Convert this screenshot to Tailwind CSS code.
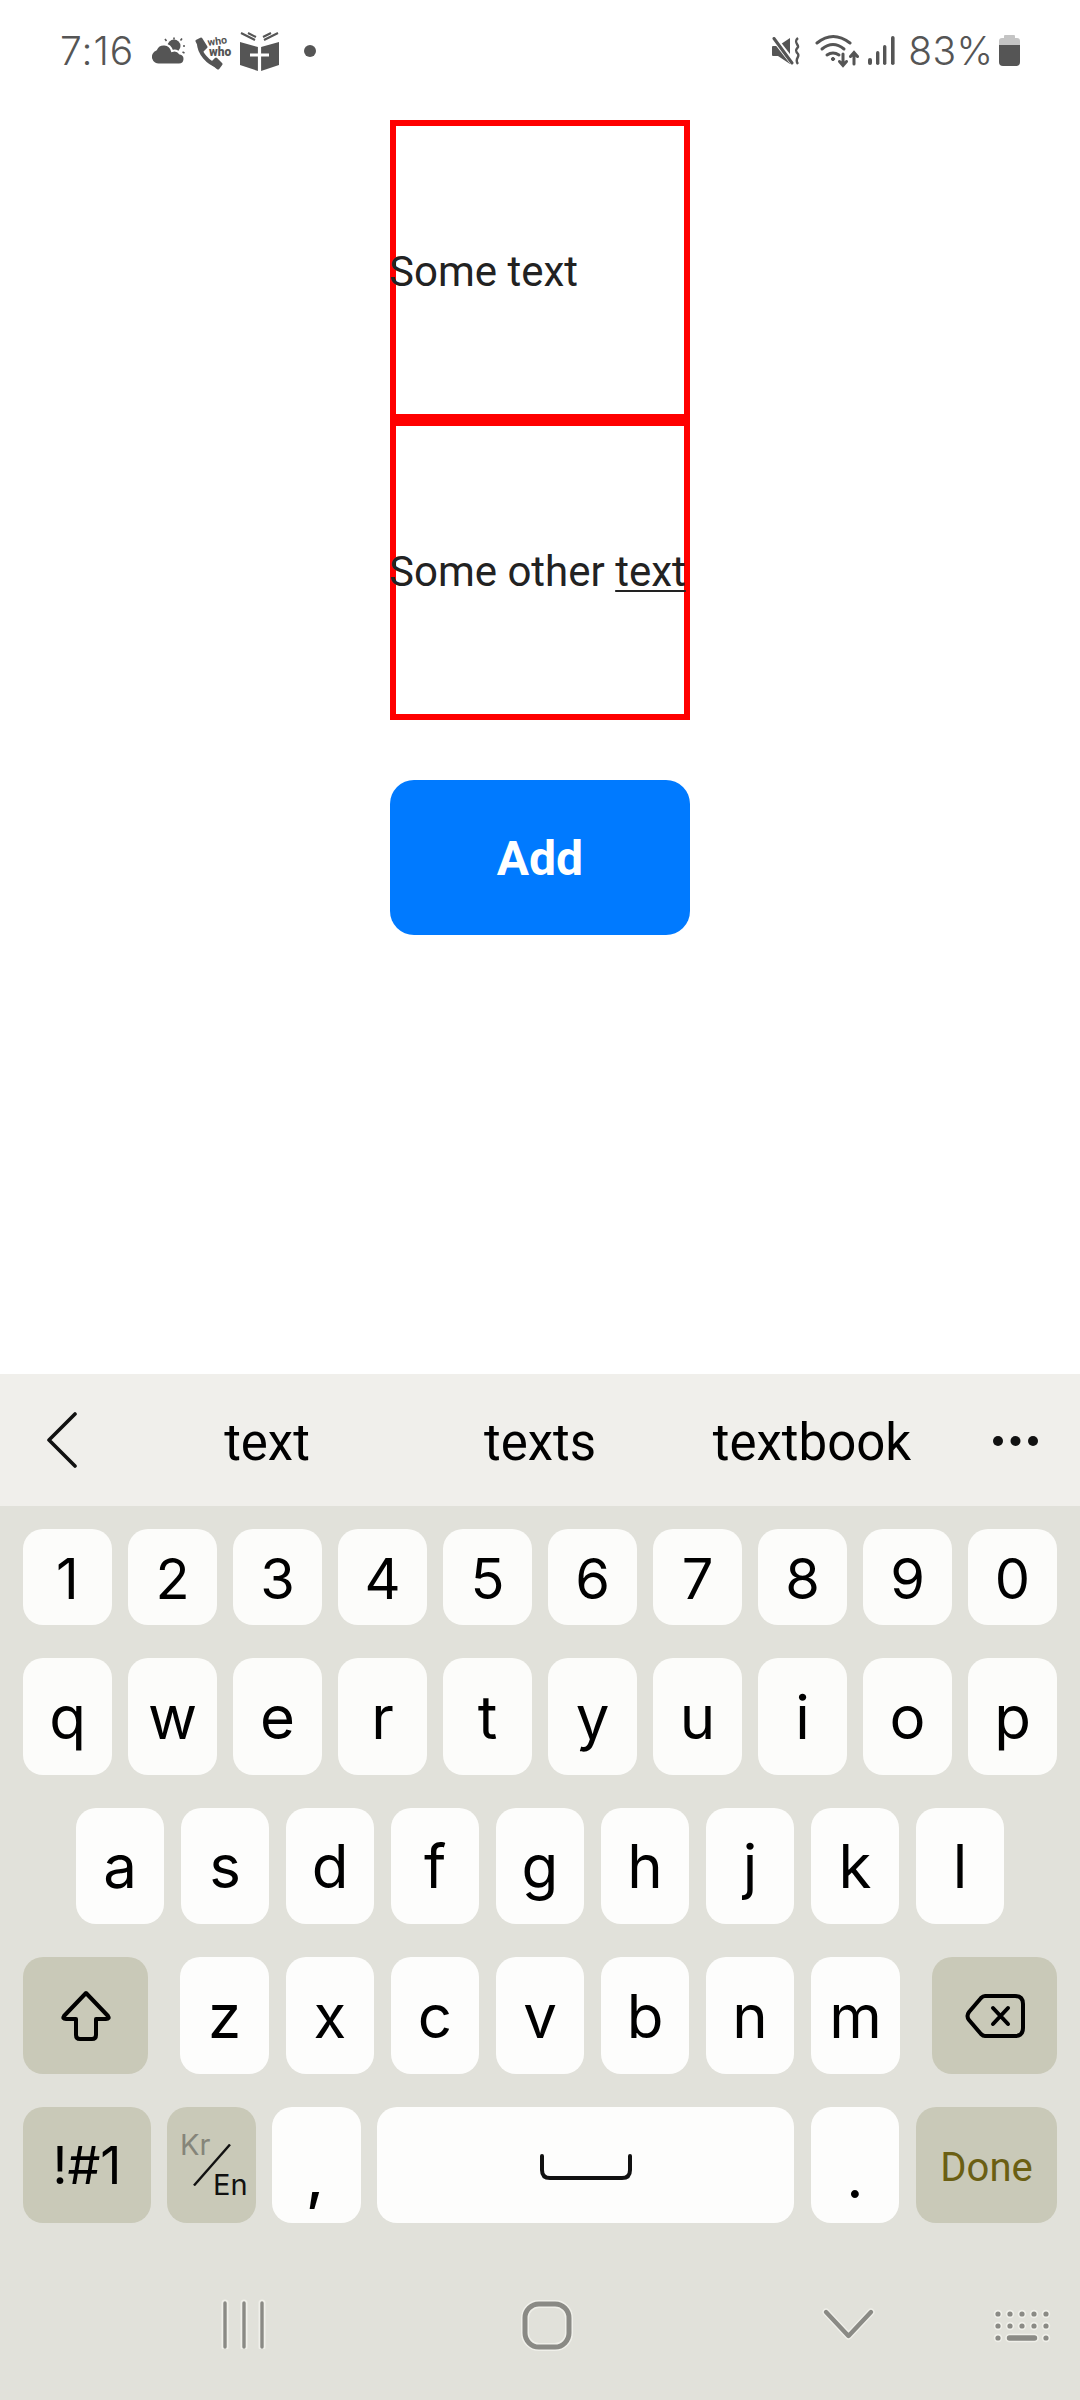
<!DOCTYPE html>
<html>
<head>
<meta charset="utf-8">
<script src="https://cdn.jsdelivr.net/npm/@tailwindcss/browser@4"></script>
</head>
<body class="m-0 bg-white">
<div class="w-[1080px] h-[2400px] flex flex-col overflow-hidden font-['Roboto',sans-serif]">

  <!-- status bar -->
  <div class="h-[100px] flex items-start text-[#555] font-['Inter',sans-serif] font-light">
    <span class="ml-[60px] mt-[28px] text-[39px] leading-[46px] tracking-[1px]">7:16</span>
    <svg class="ml-[18px] mt-[37px]" width="33" height="28" viewBox="0 0 33 28" fill="#555">
      <circle cx="22" cy="9" r="6.5"/>
      <path d="M22 0.5V2.5M13 2L14.5 4M30 1.5L28.5 3.5M31 9H33M30.5 15L32.5 16" stroke="#555" stroke-width="1.6" fill="none"/>
      <path d="M8 27.5H27A5.5 5.5 0 0 0 28 16.6A7 7 0 0 0 20 14A8.5 8.5 0 0 0 4 12.5A7.8 7.8 0 0 0 8 27.5Z" stroke="#fff" stroke-width="2"/>
    </svg>
    <svg class="ml-[10px] mt-[33px]" width="40" height="38" viewBox="0 0 40 38">
      <path d="M4 10C4 20 13 30 23 33" stroke="#555" stroke-width="4" fill="none" stroke-linecap="round"/>
      <path d="M2 8L6 6L11 14L7 18Z M17 30L21 26L26 31L23 35Z" fill="#555" stroke="#555" stroke-width="3" stroke-linejoin="round"/>
      <text x="13" y="13" transform="rotate(-8 13 13)" font-family="Roboto" font-weight="700" font-size="10.5" fill="#555">who</text>
      <text x="14" y="23" font-family="Roboto" font-weight="900" font-size="12" fill="#555">who</text>
    </svg>
    <svg class="ml-[5px] mt-[32px]" width="39" height="39" viewBox="0 0 39 39" fill="#555">
      <path d="M0 10L18 15V39L0 33ZM39 10L21 15V39L39 33Z"/>
      <path d="M1 1L15 8M8 1L16 5M38 1L24 8M31 1L23 5" stroke="#555" stroke-width="2" fill="none"/>
      <path d="M19.5 14V39M10 23H29" stroke="#fff" stroke-width="3.2" fill="none"/>
    </svg>
    <span class="ml-[25px] mt-[45px] w-[12px] h-[12px] rounded-full bg-[#555]"></span>

    <svg class="ml-[455px] mt-[37px]" width="29" height="28" viewBox="0 0 29 28">
      <path d="M1 10Q1 9 2 9H7L19 1V27L7 19H2Q1 19 1 18Z" fill="#555"/>
      <path d="M2 0L23 27" stroke="#fff" stroke-width="6"/>
      <path d="M3 1.5L21 26" stroke="#555" stroke-width="3" stroke-linecap="round"/>
      <path d="M27 1C22 5 28 8 27 10C26 12 23 13 27 17C29 20 23 22 27 27" stroke="#555" stroke-width="2.4" fill="none"/>
    </svg>
    <svg class="ml-[15px] mt-[34px]" width="44" height="34" viewBox="0 0 44 34" fill="none" stroke="#555" stroke-width="3" stroke-linecap="round">
      <path d="M2 9Q18 -4 35 9"/>
      <path d="M7 15Q18 6 29 15"/>
      <path d="M12 21Q18 17 24 21"/>
      <circle cx="18" cy="25" r="1.6" fill="#555" stroke-width="1"/>
      <path d="M28 20V31M24.5 27.5L28 31.5L31.5 27.5"/>
      <path d="M39 30V19M35.5 22.5L39 18.5L42.5 22.5"/>
    </svg>
    <svg class="ml-[9px] mt-[36px]" width="28" height="30" viewBox="0 0 28 30" fill="#555">
      <rect x="0" y="22" width="4" height="7" rx="2"/>
      <rect x="8" y="15" width="3.4" height="14" rx="1.7"/>
      <rect x="15" y="9" width="3.4" height="20" rx="1.7"/>
      <rect x="23" y="0" width="3.6" height="29" rx="1.8"/>
    </svg>
    <span class="ml-[12px] mt-[28px] text-[39px] leading-[46px] tracking-[0.3px]">83%</span>
    <svg class="ml-[6px] mt-[35px]" width="21" height="31" viewBox="0 0 21 31">
      <path d="M6 0H15Q16 0 16 1V3H18Q21 3 21 6V10H0V6Q0 3 3 3H5V1Q5 0 6 0Z" fill="#c4c4c4"/>
      <path d="M0 10H21V27Q21 31 17 31H4Q0 31 0 27Z" fill="#555"/>
    </svg>
  </div>

  <!-- content -->
  <div class="flex-1 flex flex-col items-center pt-[20px] text-[#222] text-[42px]">
    <div class="w-[300px] h-[300px] border-[6px] border-[#ff0000] flex items-center">
      <span class="-ml-[7px] mt-[3px] whitespace-nowrap">Some text</span>
    </div>
    <div class="w-[300px] h-[300px] border-[6px] border-[#ff0000] flex items-center">
      <span class="-ml-[7px] mt-[3px] whitespace-nowrap">Some other <span class="underline decoration-2 underline-offset-[4px]">text</span></span>
    </div>
    <div class="mt-[60px] w-[300px] h-[155px] rounded-[24px] bg-[#007aff] flex items-center justify-center text-white font-bold text-[48px] pt-[3px]">Add</div>
  </div>

  <!-- suggestion strip -->
  <div class="h-[132px] bg-[#f0efeb] flex items-center text-black text-[51px] relative">
    <svg class="ml-[46px] shrink-0" width="32" height="56" viewBox="0 0 32 56" fill="none" stroke="#111" stroke-width="3.6" stroke-linecap="round" stroke-linejoin="round">
      <path d="M29 2L3 28L29 54"/>
    </svg>
    <span class="absolute left-[167px] w-[200px] text-center mt-[6px]">text</span>
    <span class="absolute left-[440px] w-[200px] text-center mt-[6px]">texts</span>
    <span class="absolute left-[712px] w-[200px] text-center mt-[6px]">textbook</span>
    <svg class="absolute left-[993px] top-[59px]" width="46" height="16" viewBox="0 0 46 16" fill="#111">
      <circle cx="5" cy="8" r="5"/><circle cx="22.5" cy="8" r="5"/><circle cx="40" cy="8" r="5"/>
    </svg>
  </div>

  <!-- keyboard -->
  <div class="h-[894px] bg-[#e1e1da] flex flex-col px-[23px] text-black text-[60px] font-['Inter',sans-serif]">
    <div class="mt-[23px] h-[96px] flex gap-[16px] text-[56px]">
      <div class="w-[89px] rounded-[20px] bg-[#fcfcfa] flex items-center justify-center pt-[3px]">1</div>
      <div class="w-[89px] rounded-[20px] bg-[#fcfcfa] flex items-center justify-center pt-[3px]">2</div>
      <div class="w-[89px] rounded-[20px] bg-[#fcfcfa] flex items-center justify-center pt-[3px]">3</div>
      <div class="w-[89px] rounded-[20px] bg-[#fcfcfa] flex items-center justify-center pt-[3px]">4</div>
      <div class="w-[89px] rounded-[20px] bg-[#fcfcfa] flex items-center justify-center pt-[3px]">5</div>
      <div class="w-[89px] rounded-[20px] bg-[#fcfcfa] flex items-center justify-center pt-[3px]">6</div>
      <div class="w-[89px] rounded-[20px] bg-[#fcfcfa] flex items-center justify-center pt-[3px]">7</div>
      <div class="w-[89px] rounded-[20px] bg-[#fcfcfa] flex items-center justify-center pt-[3px]">8</div>
      <div class="w-[89px] rounded-[20px] bg-[#fcfcfa] flex items-center justify-center pt-[3px]">9</div>
      <div class="w-[89px] rounded-[20px] bg-[#fcfcfa] flex items-center justify-center pt-[3px]">0</div>
    </div>
    <div class="mt-[33px] h-[117px] flex gap-[16px]">
      <div class="w-[89px] rounded-[20px] bg-[#fcfcfa] flex items-center justify-center">q</div>
      <div class="w-[89px] rounded-[20px] bg-[#fcfcfa] flex items-center justify-center">w</div>
      <div class="w-[89px] rounded-[20px] bg-[#fcfcfa] flex items-center justify-center">e</div>
      <div class="w-[89px] rounded-[20px] bg-[#fcfcfa] flex items-center justify-center">r</div>
      <div class="w-[89px] rounded-[20px] bg-[#fcfcfa] flex items-center justify-center">t</div>
      <div class="w-[89px] rounded-[20px] bg-[#fcfcfa] flex items-center justify-center">y</div>
      <div class="w-[89px] rounded-[20px] bg-[#fcfcfa] flex items-center justify-center">u</div>
      <div class="w-[89px] rounded-[20px] bg-[#fcfcfa] flex items-center justify-center">i</div>
      <div class="w-[89px] rounded-[20px] bg-[#fcfcfa] flex items-center justify-center">o</div>
      <div class="w-[89px] rounded-[20px] bg-[#fcfcfa] flex items-center justify-center">p</div>
    </div>
    <div class="mt-[33px] h-[116px] flex gap-[17px] pl-[53px]">
      <div class="w-[88px] rounded-[20px] bg-[#fdfdfc] flex items-center justify-center">a</div>
      <div class="w-[88px] rounded-[20px] bg-[#fdfdfc] flex items-center justify-center">s</div>
      <div class="w-[88px] rounded-[20px] bg-[#fdfdfc] flex items-center justify-center">d</div>
      <div class="w-[88px] rounded-[20px] bg-[#fdfdfc] flex items-center justify-center">f</div>
      <div class="w-[88px] rounded-[20px] bg-[#fdfdfc] flex items-center justify-center">g</div>
      <div class="w-[88px] rounded-[20px] bg-[#fdfdfc] flex items-center justify-center">h</div>
      <div class="w-[88px] rounded-[20px] bg-[#fdfdfc] flex items-center justify-center">j</div>
      <div class="w-[88px] rounded-[20px] bg-[#fdfdfc] flex items-center justify-center">k</div>
      <div class="w-[88px] rounded-[20px] bg-[#fdfdfc] flex items-center justify-center">l</div>
    </div>
    <div class="mt-[33px] h-[117px] flex gap-[17px]">
      <div class="w-[125px] mr-[15px] rounded-[20px] bg-[#c9c9b8] flex items-center justify-center">
        <svg width="52" height="52" viewBox="0 0 52 52" fill="none" stroke="#000" stroke-width="4" stroke-linejoin="round"><path d="M26 3L48 26Q50 29 46 29H36V45Q36 49 32 49H20Q16 49 16 45V29H6Q2 29 4 26Z"/></svg>
      </div>
      <div class="w-[89px] rounded-[20px] bg-[#fdfdfc] flex items-center justify-center">z</div>
      <div class="w-[88px] rounded-[20px] bg-[#fdfdfc] flex items-center justify-center">x</div>
      <div class="w-[88px] rounded-[20px] bg-[#fdfdfc] flex items-center justify-center">c</div>
      <div class="w-[88px] rounded-[20px] bg-[#fdfdfc] flex items-center justify-center">v</div>
      <div class="w-[88px] rounded-[20px] bg-[#fdfdfc] flex items-center justify-center">b</div>
      <div class="w-[88px] rounded-[20px] bg-[#fdfdfc] flex items-center justify-center">n</div>
      <div class="w-[89px] rounded-[20px] bg-[#fdfdfc] flex items-center justify-center">m</div>
      <div class="w-[125px] ml-[15px] rounded-[20px] bg-[#c9c9b8] flex items-center justify-center">
        <svg width="60" height="46" viewBox="0 0 60 46" fill="none" stroke="#000" stroke-width="4" stroke-linecap="round" stroke-linejoin="round">
          <path d="M20 3H50Q58 3 58 11V35Q58 43 50 43H20Q18 43 16 41L4 27Q1 23 4 19L16 5Q18 3 20 3Z"/>
          <path d="M28 15L43 31M43 15L28 31"/>
        </svg>
      </div>
    </div>
    <div class="mt-[33px] h-[116px] flex gap-[16px]">
      <div class="w-[128px] rounded-[20px] bg-[#c9c9b8] flex items-center justify-center text-[52px] pt-[2px]">!#1</div>
      <div class="w-[89px] rounded-[20px] bg-[#c9c9b8] relative font-normal">
        <span class="absolute left-[13px] top-[21px] text-[29px] leading-[34px] text-[#85857a]">Kr</span>
        <svg class="absolute left-[26px] top-[37px]" width="38" height="42" viewBox="0 0 38 42" fill="none" stroke="#111" stroke-width="2.4"><path d="M37 0.5L1 41.5"/></svg>
        <span class="absolute left-[46px] top-[61px] text-[29px] leading-[34px] text-[#111]">En</span>
      </div>
      <div class="w-[89px] rounded-[20px] bg-[#fdfdfc] flex items-center justify-center pt-[22px] text-[60px] font-medium"><span class="mr-[3px]">,</span></div>
      <div class="w-[417px] rounded-[20px] bg-[#fdfdfc] flex items-center justify-center pt-[4px]">
        <svg width="94" height="26" viewBox="0 0 94 26" fill="none" stroke="#111" stroke-width="4" stroke-linecap="round"><path d="M3 2V16Q3 24 11 24H83Q91 24 91 16V2"/></svg>
      </div>
      <div class="w-[88px] rounded-[20px] bg-[#fdfdfc] flex items-center justify-center pt-[22px] ml-[1px]">.</div>
      <div class="w-[141px] ml-[1px] rounded-[20px] bg-[#c9c9b8] flex items-center justify-center text-[40px] text-[#6b5f13] font-['Roboto',sans-serif] pt-[5px]">Done</div>
    </div>

    <!-- nav bar -->
    <div class="mt-[76px] h-[50px] relative -mx-[23px]">
      <svg class="absolute left-[220px] top-0" width="48" height="50" viewBox="0 0 48 50" fill="none" stroke-linecap="round">
        <path d="M5 4V48M24 4V48M42 4V48" stroke="#f0f0ea" stroke-width="7"/>
        <path d="M5 4V48M24 4V48M42 4V48" stroke="#8a8a85" stroke-width="3.4"/>
      </svg>
      <svg class="absolute left-[520px] top-0" width="54" height="52" viewBox="0 0 54 52" fill="none">
        <rect x="5" y="5" width="44" height="43" rx="14" stroke="#f0f0ea" stroke-width="8"/>
        <rect x="5" y="5" width="44" height="43" rx="14" stroke="#8a8a85" stroke-width="5"/>
      </svg>
      <svg class="absolute left-[820px] top-[6px]" width="58" height="38" viewBox="0 0 58 38" fill="none" stroke-linecap="round" stroke-linejoin="round">
        <path d="M6 7L28.5 31L51 7" stroke="#f0f0ea" stroke-width="7"/>
        <path d="M6 7L28.5 31L51 7" stroke="#8a8a85" stroke-width="4.4"/>
      </svg>
      <svg class="absolute left-[992px] top-[9px]" width="60" height="36" viewBox="0 0 60 36" fill="#8a8a85">
        <g stroke="#f0f0ea" stroke-width="1.6">
          <circle cx="6" cy="6" r="3.4"/><circle cx="18" cy="6" r="3.4"/><circle cx="30" cy="6" r="3.4"/><circle cx="42" cy="6" r="3.4"/><circle cx="54" cy="6" r="3.4"/>
          <circle cx="6" cy="18" r="3.4"/><circle cx="18" cy="18" r="3.4"/><circle cx="30" cy="18" r="3.4"/><circle cx="42" cy="18" r="3.4"/><circle cx="54" cy="18" r="3.4"/>
          <circle cx="6" cy="30" r="3.4"/><rect x="14" y="26.5" width="32" height="7" rx="3.5"/><circle cx="54" cy="30" r="3.4"/>
        </g>
      </svg>
    </div>
  </div>
</div>
</body>
</html>
